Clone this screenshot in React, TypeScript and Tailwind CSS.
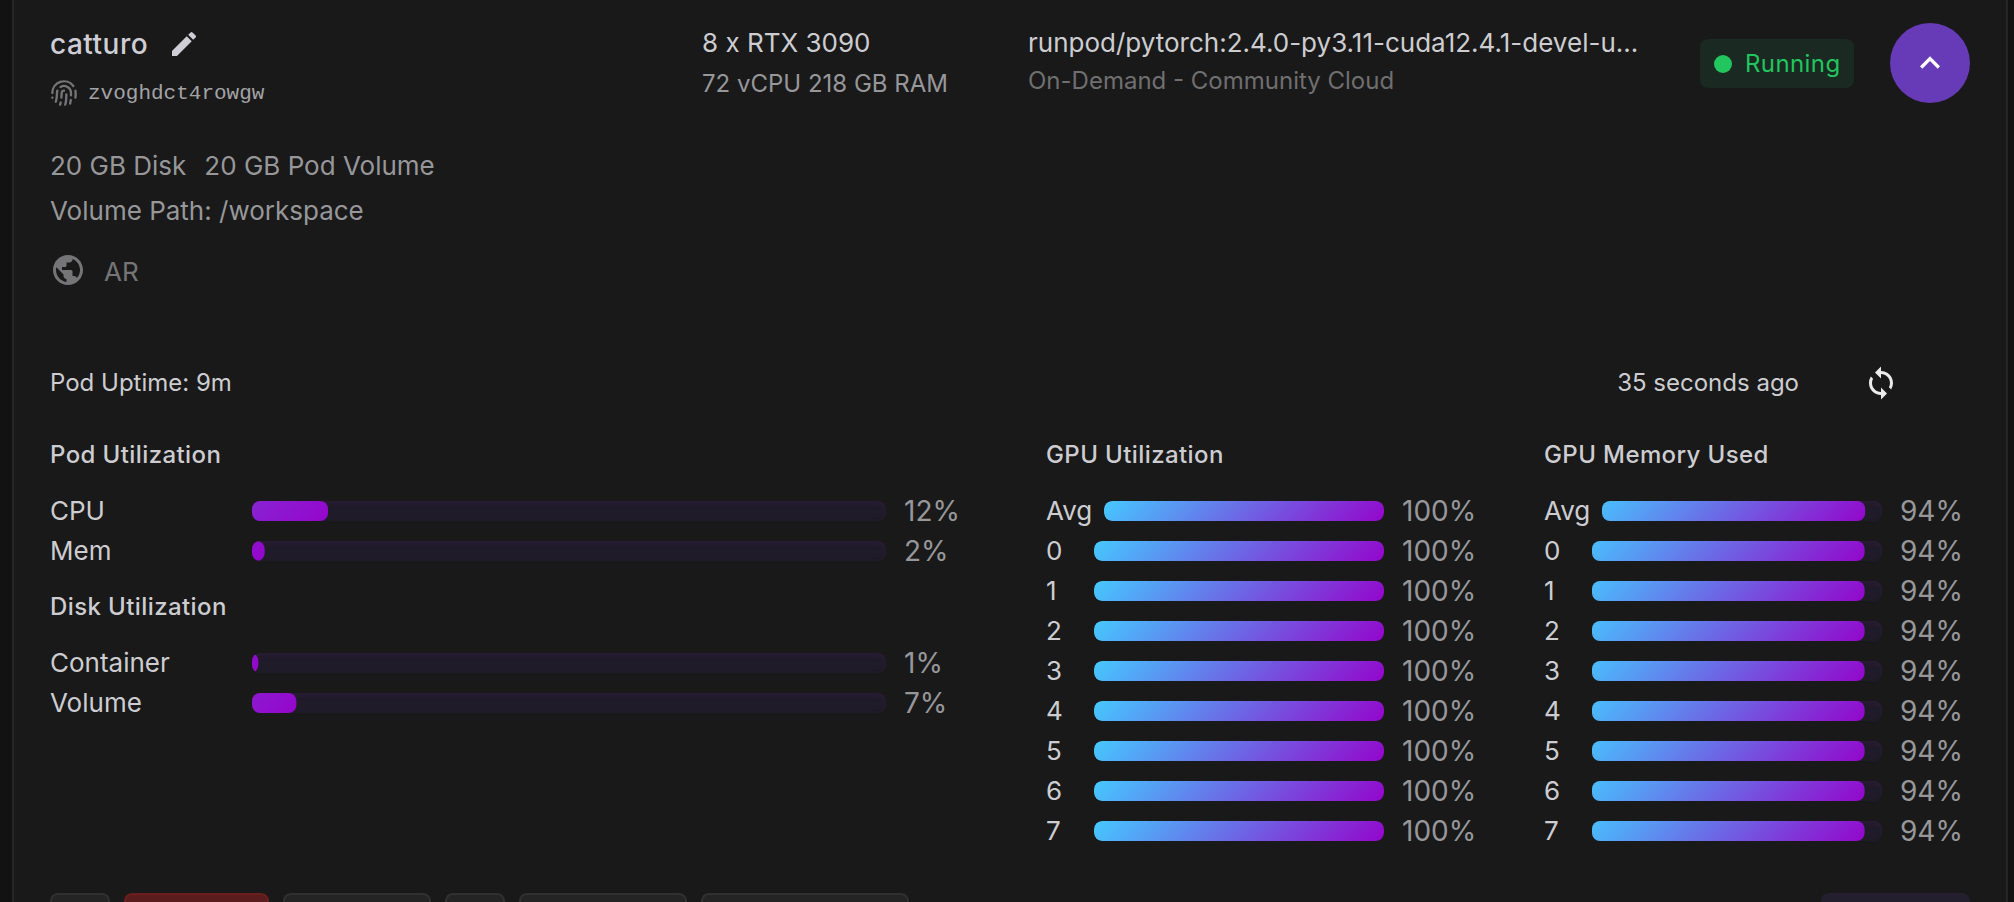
import React from 'react';
import { Fingerprint } from 'lucide-react';
import { MdEdit, MdKeyboardArrowUp, MdPublic, MdSync } from 'react-icons/md';

function Bar({ value }: { value: number }) {
  return (
    <div className="h-5 min-w-0 flex-1 overflow-hidden rounded-lg bg-[#1f1b28] shadow-[inset_0_3px_5px_rgba(70,35,85,0.28)]">
      <div
        className="h-full w-full rounded-lg bg-[linear-gradient(135deg,#45c9ff_0%,#9406cb_100%)]"
        style={{ transform: `translateX(${value - 100}%)` }}
      />
    </div>
  );
}

function MeterRow({ label, value, wide = false }: { label: string; value: number; wide?: boolean }) {
  return (
    <div className="flex h-10 items-center">
      <div
        className={
          wide
            ? 'w-[202px] shrink-0 text-[26px] leading-10 text-[#cdcdd1]'
            : 'min-w-9 shrink-0 text-[26px] leading-10 text-[#cdcdd1]'
        }
      >
        {label}
      </div>
      <div className={wide ? 'flex flex-1' : 'ml-3 flex flex-1'}>
        <Bar value={value} />
      </div>
      <div className="ml-[18px] w-[70px] shrink-0 text-[28px] leading-10 whitespace-nowrap text-[#97979a]">
        {value}%
      </div>
    </div>
  );
}

function Heading({ children }: { children: React.ReactNode }) {
  return (
    <h3 className="mb-[18px] h-[37px] text-2xl leading-[37px] font-medium tracking-[0.4px] text-[#cdcdd1]">
      {children}
    </h3>
  );
}

function GpuMeters({ title, value }: { title: string; value: number }) {
  return (
    <section>
      <Heading>{title}</Heading>
      {['Avg', '0', '1', '2', '3', '4', '5', '6', '7'].map((label) => (
        <MeterRow key={label} label={label} value={value} />
      ))}
    </section>
  );
}

const grayButton = 'h-16 rounded-lg border-2 border-[#303030] bg-[#242424]';

export default function App() {
  return (
    <div className="h-[902px] w-[2014px] overflow-hidden bg-[#121212] pr-[6px] pl-3 font-['Inter',sans-serif]">
      <main className="h-[960px] border-x-2 border-[#262626] bg-[#191919] pr-9 pl-9">
        <header className="flex h-[142px] items-start">
          <div className="w-[652px] pt-[26px]">
            <div className="flex h-9 items-center text-[28px] leading-9 font-medium tracking-[0.5px] text-[#cfced6]">
              <span>catturo</span>
              <MdEdit className="ml-5 size-8" />
            </div>
            <div className="mt-[15px] flex h-8 items-center text-[#a3a3a6]">
              <Fingerprint className="size-7 text-[#757577]" strokeWidth={2} />
              <span className="ml-[10px] pt-[2px] font-['Liberation_Mono',monospace] text-[21px] leading-8">
                zvoghdct4rowgw
              </span>
            </div>
          </div>
          <div className="w-[326px] pt-[23px]">
            <div className="h-10 text-[26px] leading-10 text-[#cdcdd1]">8 x RTX 3090</div>
            <div className="h-10 text-2xl leading-[42px] text-[#97979a]">72 vCPU 218 GB RAM</div>
          </div>
          <div className="w-[672px] pt-[23px]">
            <div className="h-10 text-[26px] leading-10 text-[#cdcdd1]">
              runpod/pytorch:2.4.0-py3.11-cuda12.4.1-devel-u...
            </div>
            <div className="h-9 text-2xl leading-9 text-[#6f6f70]">On-Demand - Community Cloud</div>
          </div>
          <div className="mt-[39px] flex h-[49px] w-[154px] items-center rounded-lg bg-[#1a2a22] pl-[14px]">
            <span className="size-[18px] rounded-full bg-[#22c55e]" />
            <span className="ml-[13px] text-2xl tracking-[0.4px] text-[#22c55e]">Running</span>
          </div>
          <button className="mt-[23px] ml-9 flex size-20 items-center justify-center rounded-full bg-[#673ab7] text-white">
            <MdKeyboardArrowUp className="size-10" />
          </button>
        </header>

        <section className="h-[222px] text-[26px] text-[#97979a]">
          <div className="flex h-[46px] gap-[18px] leading-[47px]">
            <span>20 GB Disk</span>
            <span>20 GB Pod Volume</span>
          </div>
          <div className="h-[46px] leading-[46px]">Volume Path: /workspace</div>
          <div className="mt-4 flex h-10 items-center gap-[18px] text-[#757577]">
            <MdPublic className="size-9" />
            <span className="pt-[3px]">AR</span>
          </div>
        </section>

        <div className="flex h-[72px] justify-between text-2xl leading-[37px] text-[#cdcdd1]">
          <span>Pod Uptime: 9m</span>
          <div className="flex h-[37px] items-center pr-[71px]">
            <span>35 seconds ago</span>
            <MdSync className="ml-[64px] size-9 text-[#ebebeb]" />
          </div>
        </div>

        <div className="flex h-[457px]">
          <div className="w-[924px]">
            <Heading>Pod Utilization</Heading>
            <MeterRow label="CPU" value={12} wide />
            <MeterRow label="Mem" value={2} wide />
            <div className="h-[17px]" />
            <Heading>Disk Utilization</Heading>
            <MeterRow label="Container" value={1} wide />
            <MeterRow label="Volume" value={7} wide />
          </div>
          <div className="ml-[72px] w-[426px]">
            <GpuMeters title="GPU Utilization" value={100} />
          </div>
          <div className="ml-[72px] w-[426px]">
            <GpuMeters title="GPU Memory Used" value={94} />
          </div>
        </div>

        <footer className="flex gap-[14px]">
          <button className={`${grayButton} w-[60px]`} />
          <button className="h-16 w-[145px] rounded-lg border-2 border-[#6a1e1e] bg-[#5a1c1c]" />
          <button className={`${grayButton} w-[148px]`} />
          <button className={`${grayButton} w-[60px]`} />
          <button className={`${grayButton} w-[168px]`} />
          <button className={`${grayButton} w-[208px]`} />
          <button className="ml-auto h-16 w-[149px] rounded-lg bg-[#241f2e]" />
        </footer>
      </main>
    </div>
  );
}
